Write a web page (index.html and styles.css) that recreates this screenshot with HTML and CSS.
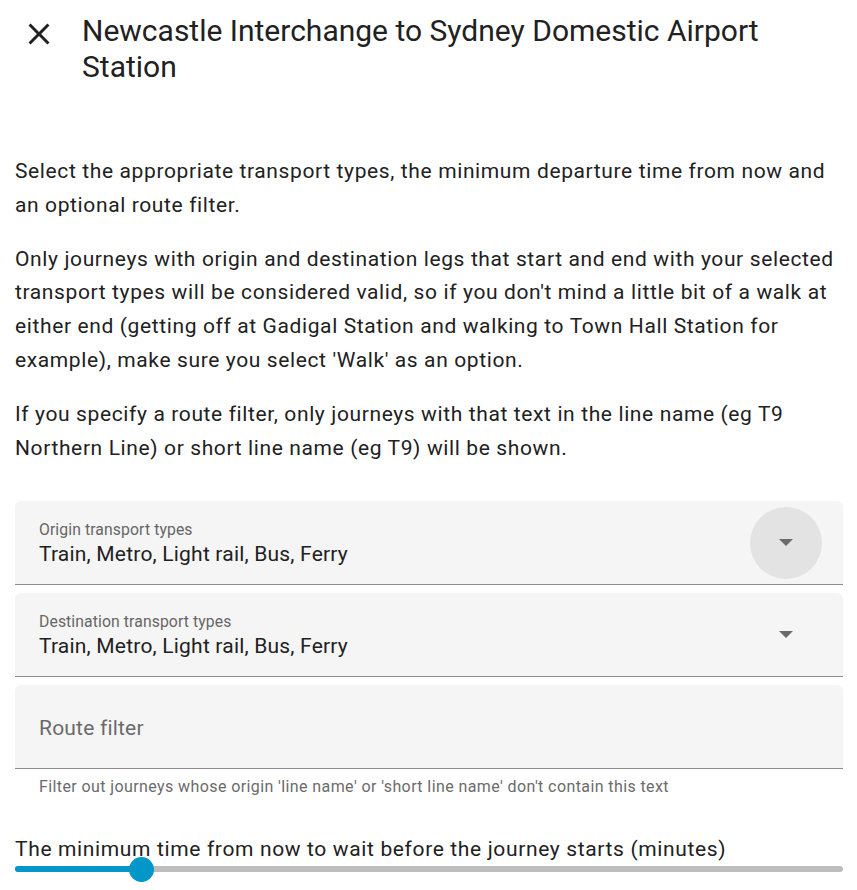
FILE: index.html
```html
<!DOCTYPE html>
<html>
<head>
<meta charset="utf-8">
<link rel="stylesheet" href="styles.css">
</head>
<body>
<div class="dialog">
  <div class="header">
    <svg class="close" viewBox="0 0 24 24"><path d="M19,6.41L17.59,5L12,10.59L6.41,5L5,6.41L10.59,12L5,17.59L6.41,19L12,13.41L17.59,19L19,17.59L13.41,12L19,6.41Z"/></svg>
    <h2 class="title">Newcastle Interchange to Sydney Domestic Airport Station</h2>
  </div>
  <div class="content">
    <p>Select the appropriate transport types, the minimum departure time from now and an optional route filter.</p>
    <p>Only journeys with origin and destination legs that start and end with your selected transport types will be considered valid, so if you don't mind a little bit of a walk at either end (getting off at Gadigal Station and walking to Town Hall Station for example), make sure you select 'Walk' as an option.</p>
    <p>If you specify a route filter, only journeys with that text in the line name (eg T9 Northern Line) or short line name (eg T9) will be shown.</p>

    <div class="fields">
      <div class="field select">
        <div class="field-text">
          <span class="label">Origin transport types</span>
          <span class="value">Train, Metro, Light rail, Bus, Ferry</span>
        </div>
        <div class="arrow-wrap hover"><span class="arrow"></span></div>
      </div>
      <div class="field select">
        <div class="field-text">
          <span class="label">Destination transport types</span>
          <span class="value">Train, Metro, Light rail, Bus, Ferry</span>
        </div>
        <div class="arrow-wrap"><span class="arrow"></span></div>
      </div>
      <div class="field input">
        <span class="placeholder">Route filter</span>
      </div>
    </div>
    <div class="helper">Filter out journeys whose origin 'line name' or 'short line name' don't contain this text</div>

    <div class="slider-label">The minimum time from now to wait before the journey starts (minutes)</div>
    <div class="slider">
      <div class="track"><div class="active" style="width:126px"></div></div>
      <div class="thumb" style="left:126px"></div>
    </div>
  </div>
</div>
</body>
</html>
```

FILE: styles.css
```css
html, body {
  margin: 0;
  padding: 0;
  background: #ffffff;
}
body {
  font-family: Roboto, "Noto Sans", sans-serif;
  color: #212121;
  width: 857px;
  height: 890px;
  overflow: hidden;
}
.header {
  display: flex;
  align-items: flex-start;
  padding: 13px 20px 0 21px;
}
.close {
  width: 36px;
  height: 36px;
  flex: none;
  margin-top: 3px;
  fill: #212121;
}
.title {
  margin: 0 0 0 25px;
  font-size: 30px;
  font-weight: 400;
  line-height: 36px;
  color: #212121;
}
.content {
  padding: 0 14px 0 15px;
  margin-top: 70px;
}
.content p {
  margin: 0 0 20px 0;
  font-size: 21px;
  line-height: 33.8px;
  letter-spacing: 0.62px;
}
.fields {
  display: flex;
  flex-direction: column;
  gap: 8px;
  margin-top: 36px;
}
.field {
  background: #f5f5f5;
  border-radius: 6px 6px 0 0;
  border-bottom: 1px solid #8c8c8c;
  height: 83px;
  box-sizing: content-box;
  display: flex;
  align-items: center;
  padding: 0 21px 0 24px;
}
.field-text {
  flex: 1;
  display: flex;
  flex-direction: column;
  padding-top: 2px;
}
.label {
  font-size: 15.75px;
  line-height: 20px;
  color: #666666;
  letter-spacing: 0.1px;
}
.value {
  font-size: 21px;
  line-height: 28px;
  color: #212121;
  letter-spacing: 0.2px;
}
.arrow-wrap {
  width: 72px;
  height: 72px;
  border-radius: 50%;
  display: flex;
  align-items: center;
  justify-content: center;
  flex: none;
}
.arrow-wrap.hover {
  background: #e3e3e3;
}
.arrow {
  width: 0;
  height: 0;
  border-left: 7px solid transparent;
  border-right: 7px solid transparent;
  border-top: 7px solid #6b6b6b;
}
.placeholder {
  font-size: 21px;
  color: #6b6b6b;
  letter-spacing: 0.2px;
  padding-top: 2px;
}
.helper {
  font-size: 16px;
  color: #6b6b6b;
  padding: 8px 0 0 24px;
  line-height: 20px;
  letter-spacing: 0.4px;
}
.slider-label {
  margin-top: 39px;
  font-size: 21px;
  line-height: 26px;
  letter-spacing: 0.64px;
}
.slider {
  position: relative;
  height: 20px;
  margin-top: -3px;
}
.track {
  position: absolute;
  left: 0;
  right: 0;
  top: 7px;
  height: 6px;
  border-radius: 3px;
  background: #bdbdbd;
  overflow: hidden;
}
.active {
  height: 100%;
  background: #0297c8;
}
.thumb {
  position: absolute;
  top: -2px;
  width: 25px;
  height: 25px;
  margin-left: -12px;
  border-radius: 50%;
  background: #0297c8;
}
```
